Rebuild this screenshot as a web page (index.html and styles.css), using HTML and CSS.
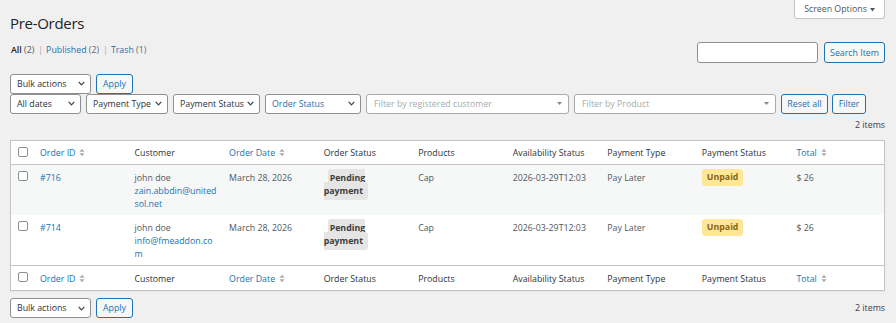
FILE: index.html
```html
<!DOCTYPE html>
<html lang="en">
<head>
<meta charset="utf-8">
<title>Pre-Orders</title>
<link rel="stylesheet" href="styles.css">
</head>
<body>
<div class="wrap">
  <div class="page-head">
    <h1>Pre-Orders</h1>
    <div class="screen-options">Screen Options <svg class="so-tri" width="5" height="4" viewBox="0 0 5 4"><polygon points="0,0 5,0 2.5,3.6" fill="#50575e"/></svg></div>
  </div>

  <div class="top-band">
    <div class="subsubsub">
      <span class="current">All</span> <span class="count">(2)</span><span class="sep">|</span><a href="#">Published <span class="count">(2)</span></a><span class="sep">|</span><a href="#">Trash <span class="count">(1)</span></a>
    </div>
    <div class="search-box">
      <div class="search-input"></div>
      <div class="btn btn-search">Search Item</div>
    </div>
  </div>

  <div class="tablenav-top">
    <div class="nav-row">
      <div class="sel w-bulk"><span>Bulk actions</span><svg width="7" height="5" viewBox="0 0 7 5"><polyline points="0.7,0.8 3.5,3.8 6.3,0.8" fill="none" stroke="#3c434a" stroke-width="1.2"/></svg></div>
      <div class="btn w-apply">Apply</div>
    </div>
    <div class="nav-row">
      <div class="sel w-dates"><span>All dates</span><svg width="7" height="5" viewBox="0 0 7 5"><polyline points="0.7,0.8 3.5,3.8 6.3,0.8" fill="none" stroke="#3c434a" stroke-width="1.2"/></svg></div>
      <div class="sel w-ptype"><span>Payment Type</span><svg width="7" height="5" viewBox="0 0 7 5"><polyline points="0.7,0.8 3.5,3.8 6.3,0.8" fill="none" stroke="#3c434a" stroke-width="1.2"/></svg></div>
      <div class="sel w-pstatus"><span>Payment Status</span><svg width="7" height="5" viewBox="0 0 7 5"><polyline points="0.7,0.8 3.5,3.8 6.3,0.8" fill="none" stroke="#3c434a" stroke-width="1.2"/></svg></div>
      <div class="sel w-ostatus sel-blue"><span>Order Status</span><svg width="7" height="5" viewBox="0 0 7 5"><polyline points="0.7,0.8 3.5,3.8 6.3,0.8" fill="none" stroke="#3c434a" stroke-width="1.2"/></svg></div>
      <div class="sel sel2 w-customer"><span>Filter by registered customer</span><svg width="5" height="3" viewBox="0 0 5 3"><polygon points="0,0 5,0 2.5,3" fill="#888"/></svg></div>
      <div class="sel sel2 w-product"><span>Filter by Product</span><svg width="5" height="3" viewBox="0 0 5 3"><polygon points="0,0 5,0 2.5,3" fill="#888"/></svg></div>
      <div class="btn w-reset">Reset all</div>
      <div class="btn w-filter">Filter</div>
    </div>
    <div class="count-line">2 items</div>
  </div>

  <table class="list">
    <colgroup>
      <col class="c-check">
      <col><col><col><col><col><col><col><col><col>
    </colgroup>
    <thead>
      <tr>
        <th class="check"><span class="cb"></span></th>
        <th><a href="#" class="sort">Order ID</a><svg class="sort-ic" width="6" height="9" viewBox="0 0 6 9"><polygon points="0.5,3.8 3,0.8 5.5,3.8" fill="#a7aaad"/><polygon points="0.5,5.2 3,8.2 5.5,5.2" fill="#a7aaad"/></svg></th>
        <th>Customer</th>
        <th><a href="#" class="sort">Order Date</a><svg class="sort-ic" width="6" height="9" viewBox="0 0 6 9"><polygon points="0.5,3.8 3,0.8 5.5,3.8" fill="#a7aaad"/><polygon points="0.5,5.2 3,8.2 5.5,5.2" fill="#a7aaad"/></svg></th>
        <th>Order Status</th>
        <th>Products</th>
        <th>Availability Status</th>
        <th>Payment Type</th>
        <th>Payment Status</th>
        <th><a href="#" class="sort">Total</a><svg class="sort-ic" width="6" height="9" viewBox="0 0 6 9"><polygon points="0.5,3.8 3,0.8 5.5,3.8" fill="#a7aaad"/><polygon points="0.5,5.2 3,8.2 5.5,5.2" fill="#a7aaad"/></svg></th>
      </tr>
    </thead>
    <tbody>
      <tr class="alt">
        <td class="check"><span class="cb"></span></td>
        <td><a href="#">#716</a></td>
        <td>john doe<br><a href="#" class="email">zain.abbdin@united<wbr>sol.net</a></td>
        <td>March 28, 2026</td>
        <td><span class="status-pending">Pending payment</span></td>
        <td>Cap</td>
        <td>2026-03-29T12:03</td>
        <td>Pay Later</td>
        <td><span class="status-unpaid">Unpaid</span></td>
        <td>$ 26</td>
      </tr>
      <tr>
        <td class="check"><span class="cb"></span></td>
        <td><a href="#">#714</a></td>
        <td>john doe<br><a href="#" class="email">info@fmeaddon.co<wbr>m</a></td>
        <td>March 28, 2026</td>
        <td><span class="status-pending">Pending payment</span></td>
        <td>Cap</td>
        <td>2026-03-29T12:03</td>
        <td>Pay Later</td>
        <td><span class="status-unpaid">Unpaid</span></td>
        <td>$ 26</td>
      </tr>
    </tbody>
    <tfoot>
      <tr>
        <th class="check"><span class="cb"></span></th>
        <th><a href="#" class="sort">Order ID</a><svg class="sort-ic" width="6" height="9" viewBox="0 0 6 9"><polygon points="0.5,3.8 3,0.8 5.5,3.8" fill="#a7aaad"/><polygon points="0.5,5.2 3,8.2 5.5,5.2" fill="#a7aaad"/></svg></th>
        <th>Customer</th>
        <th><a href="#" class="sort">Order Date</a><svg class="sort-ic" width="6" height="9" viewBox="0 0 6 9"><polygon points="0.5,3.8 3,0.8 5.5,3.8" fill="#a7aaad"/><polygon points="0.5,5.2 3,8.2 5.5,5.2" fill="#a7aaad"/></svg></th>
        <th>Order Status</th>
        <th>Products</th>
        <th>Availability Status</th>
        <th>Payment Type</th>
        <th>Payment Status</th>
        <th><a href="#" class="sort">Total</a><svg class="sort-ic" width="6" height="9" viewBox="0 0 6 9"><polygon points="0.5,3.8 3,0.8 5.5,3.8" fill="#a7aaad"/><polygon points="0.5,5.2 3,8.2 5.5,5.2" fill="#a7aaad"/></svg></th>
      </tr>
    </tfoot>
  </table>

  <div class="tablenav-bottom">
    <div class="nav-row">
      <div class="sel w-bulk"><span>Bulk actions</span><svg width="7" height="5" viewBox="0 0 7 5"><polyline points="0.7,0.8 3.5,3.8 6.3,0.8" fill="none" stroke="#3c434a" stroke-width="1.2"/></svg></div>
      <div class="btn w-apply">Apply</div>
    </div>
    <div class="count-inline">2 items</div>
  </div>
</div>
</body>
</html>
```
FILE: styles.css
```css
* { box-sizing: border-box; }

body {
  margin: 0;
  background: #f0f0f1;
  font-family: "Open Sans", "Noto Sans", sans-serif;
  font-size: 8.8px;
  line-height: 13px;
  color: #3c434a;
}

a { color: #2271b1; text-decoration: none; }

.wrap { padding: 0 11px 0 10px; }

.page-head {
  display: flex;
  justify-content: space-between;
  align-items: flex-start;
}

h1 {
  margin: 13px 0 0;
  font-size: 15px;
  line-height: 20px;
  font-weight: 400;
  letter-spacing: -0.3px;
  color: #1d2327;
}

.screen-options {
  display: flex;
  align-items: center;
  justify-content: center;
  gap: 3px;
  width: 91px;
  height: 19px;
  padding-top: 1px;
  background: #fff;
  border: 1px solid #c3c4c7;
  border-top: 0;
  border-radius: 0 0 3px 3px;
  color: #50575e;
}

.top-band {
  display: flex;
  justify-content: space-between;
  align-items: flex-start;
  margin-top: 9px;
}

.subsubsub { padding-top: 2px; padding-left: 1px; color: #50575e; }
.subsubsub .current { color: #1d2327; font-weight: 600; }
.subsubsub .count { color: #50575e; }
.subsubsub a .count { color: #646970; }
.subsubsub .sep { margin: 0 3px 0 4px; color: #a7aaad; }

.search-box { display: flex; gap: 6px; }

.search-input {
  width: 121px;
  height: 21px;
  background: #fff;
  border: 1px solid #8c8f94;
  border-radius: 3px;
}

.btn {
  display: flex;
  align-items: center;
  justify-content: center;
  height: 20px;
  padding-top: 1px;
  border: 1px solid #2271b1;
  border-radius: 3px;
  background: #f6f7f7;
  color: #2271b1;
  white-space: nowrap;
}

.btn-search { width: 61px; height: 21px; }

.tablenav-top { margin-top: 10.5px; }

.nav-row { display: flex; gap: 5px; }

.sel {
  display: flex;
  align-items: center;
  justify-content: space-between;
  height: 20px;
  padding: 1px 5px 0 6px;
  border: 1px solid #8c8f94;
  border-radius: 3px;
  background: #fff;
  color: #2c3338;
  white-space: nowrap;
}

.sel svg { margin-top: -1px; }

.sel-blue { color: #2271b1; }

.sel2 { padding: 1px 6px 0 7px; color: #a7aaad; border-color: #a7aaad; }

.w-bulk { width: 81px; }
.w-apply { width: 37px; }
.w-dates { width: 71px; }
.w-ptype { width: 82px; }
.w-pstatus { width: 87px; }
.w-ostatus { width: 96px; }
.w-customer { width: 203px; }
.w-product { width: 202px; }
.w-reset { width: 47px; margin-right: -1px; }
.w-filter { width: 34px; }

.count-line {
  margin-top: 5px;
  text-align: right;
  color: #3c434a;
}

.list {
  width: 100%;
  margin-top: 8px;
  border: 1px solid #c3c4c7;
  border-spacing: 0;
  border-collapse: separate;
  table-layout: fixed;
  background: #fff;
  box-shadow: 0 1px 1px rgba(0, 0, 0, 0.04);
}

.c-check { width: 22px; }

.list th,
.list td {
  text-align: left;
  vertical-align: top;
  font-weight: 400;
  padding: 7px 7px 4px;
}

.list thead th {
  padding: 6px 7px 4px;
  color: #2c3338;
  border-bottom: 1px solid #c3c4c7;
}

.list tfoot th {
  padding: 7px 7px 4px;
  color: #2c3338;
  border-top: 1px solid #c3c4c7;
}

.list td { color: #50575e; }

.list tr.alt td { background: #f6f7f7; }

.list .check,
.list thead .check,
.list tfoot .check { padding: 5px 0 0 7px; }

.cb {
  display: block;
  width: 10px;
  height: 10px;
  margin-top: 1.5px;
  background: #fff;
  border: 1px solid #8c8f94;
  border-radius: 2px;
}

.sort-ic { margin-left: 4px; vertical-align: -1px; }

.email { color: #2271b1; }

.status-pending {
  margin-left: 4px;
  padding: 3px 5px 3px 2px;
  background: #e5e5e5;
  border-radius: 3px;
  color: #3c3c3c;
  font-weight: 700;
}

.status-unpaid {
  display: inline-block;
  vertical-align: top;
  margin-top: -3px;
  padding: 2px 5px;
  background: #ffe797;
  border-radius: 3px;
  color: #8c6516;
  font-weight: 700;
}

.tablenav-bottom {
  display: flex;
  justify-content: space-between;
  align-items: center;
  margin-top: 7.5px;
}
```
